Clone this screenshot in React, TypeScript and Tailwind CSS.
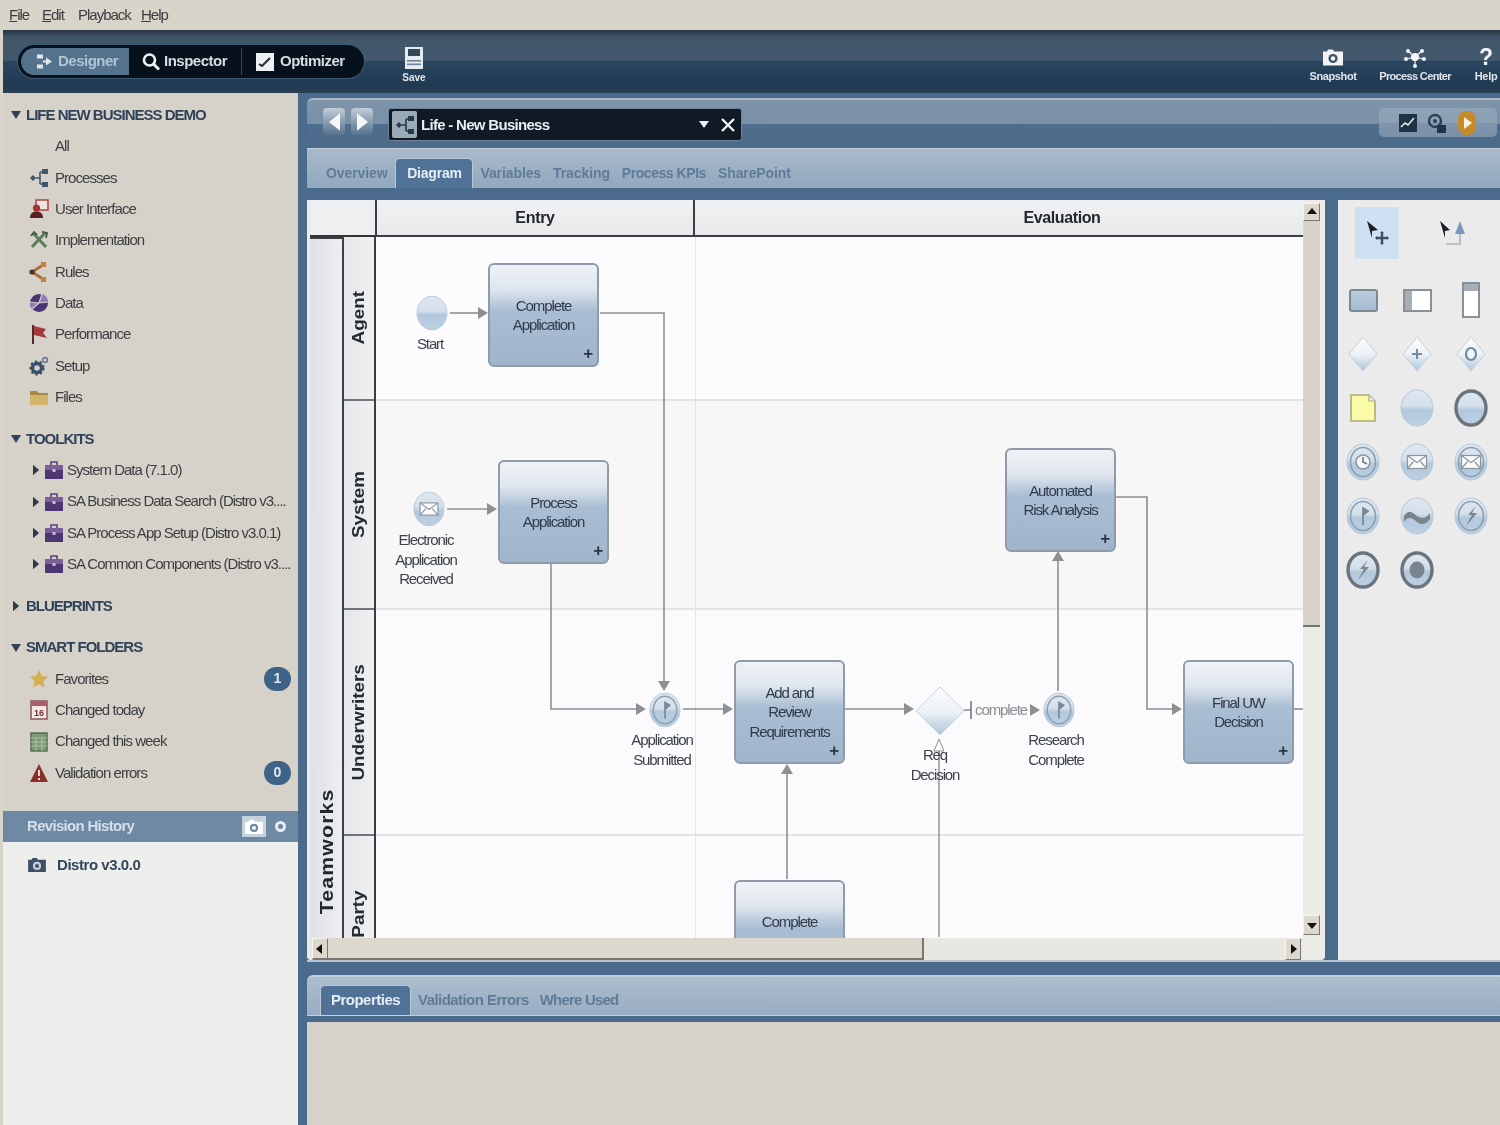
import type { ReactNode } from 'react';

const font = "font-['Liberation_Sans',Arial,sans-serif]";

// sidebar icons
function ProcessIcon({ color = '#40566a' }: { color?: string }) {
  return (
    <svg viewBox="0 0 20 20" className="h-[22px] w-[20px]">
      <path d="M1 10l3-3 3 3-3 3z" fill={color} />
      <path d="M7 10h4M11 4v12M11 4h2M11 16h2" stroke={color} strokeWidth="1.6" fill="none" />
      <rect x="13" y="1" width="6" height="5" fill={color} />
      <rect x="13" y="14" width="6" height="5" fill={color} />
    </svg>
  );
}

function SideIcon({ name }: { name: string }) {
  const cls = 'h-[22px] w-[20px] shrink-0';
  switch (name) {
    case 'process':
      return <ProcessIcon />;
    case 'ui':
      return (
        <svg viewBox="0 0 20 20" className={cls}>
          <rect x="7" y="1" width="12" height="10" fill="#f0e4df" stroke="#a33a3a" strokeWidth="1.4" />
          <circle cx="7.5" cy="9" r="3.6" fill="#a83232" />
          <path d="M1 19c0-5 3-6.5 6.5-6.5S14 14 14 19z" fill="#5a1f24" />
        </svg>
      );
    case 'impl':
      return (
        <svg viewBox="0 0 20 20" className={cls}>
          <path d="M4 3l13 14M16 3L3 17" stroke="#5c7f58" strokeWidth="3" fill="none" />
          <path d="M2 6l3-4 3 3M13 2l5 1-1 5" stroke="#3f5e45" strokeWidth="1.8" fill="none" />
        </svg>
      );
    case 'rules':
      return (
        <svg viewBox="0 0 20 20" className={cls}>
          <path d="M3 10L14 3M3 10l11 7" stroke="#a9713c" strokeWidth="3" fill="none" />
          <circle cx="3" cy="10" r="2.6" fill="#4a3322" />
          <rect x="12" y="0" width="5" height="5" fill="#c5813f" />
          <rect x="12" y="15" width="5" height="5" fill="#c5813f" />
        </svg>
      );
    case 'data':
      return (
        <svg viewBox="0 0 20 20" className={cls}>
          <circle cx="10" cy="10" r="9" fill="#4c3575" />
          <path d="M10 10L13 1a9 9 0 0 1 6 8zM1 9l9 1-7 6a9 9 0 0 1-2-7z" fill="#8f7bbb" />
          <path d="M10 10L13 1M10 10l9-1M10 10l-9-1M10 10l-7 6" stroke="#d6d2c9" strokeWidth="1.2" />
        </svg>
      );
    case 'perf':
      return (
        <svg viewBox="0 0 20 20" className={cls}>
          <path d="M4 1v19" stroke="#5a2a2a" strokeWidth="2" />
          <path d="M5 2l12 3-3 4 4 5-13-3z" fill="#a53a3a" />
        </svg>
      );
    case 'setup':
      return (
        <svg viewBox="0 0 20 20" className={cls}>
          <circle cx="8" cy="12" r="4.5" fill="none" stroke="#37506a" strokeWidth="3.4" />
          <circle cx="8" cy="12" r="6.6" fill="none" stroke="#37506a" strokeWidth="2" strokeDasharray="2.4 2.4" />
          <circle cx="16" cy="4" r="2.4" fill="none" stroke="#6d7f90" strokeWidth="1.8" />
        </svg>
      );
    case 'files':
      return (
        <svg viewBox="0 0 20 20" className={cls}>
          <path d="M1 4h7l2 2h9v12H1z" fill="#a98a45" />
          <path d="M1 8h18v10H1z" fill="#d2b568" />
        </svg>
      );
    case 'kit':
      return (
        <svg viewBox="0 0 20 20" className={cls}>
          <path d="M7 5V2h6v3" fill="none" stroke="#5b3f7d" strokeWidth="1.6" />
          <rect x="1" y="5" width="18" height="14" fill="#4e3672" />
          <rect x="1" y="5" width="18" height="5" fill="#7a6099" />
          <rect x="8.5" y="9" width="3" height="3" fill="#c9bcd8" />
        </svg>
      );
    case 'star':
      return (
        <svg viewBox="0 0 20 20" className={cls}>
          <path d="M10 1l2.8 6 6.2.7-4.6 4.4 1.2 6.4-5.6-3.2-5.6 3.2 1.2-6.4L1 7.7 7.2 7z" fill="#d5b053" />
        </svg>
      );
    case 'today':
      return (
        <svg viewBox="0 0 20 20" className={cls}>
          <rect x="2" y="1" width="16" height="18" fill="#f1e9e5" stroke="#8a4a52" strokeWidth="1.4" />
          <rect x="2" y="1" width="16" height="5" fill="#a9606a" />
          <text x="10" y="16" textAnchor="middle" fontSize="9" fontWeight="700" fill="#7a2c34">16</text>
        </svg>
      );
    case 'week':
      return (
        <svg viewBox="0 0 20 20" className={cls}>
          <rect x="2" y="1" width="16" height="18" fill="#7f9a74" stroke="#4d6a4c" strokeWidth="1.4" />
          <path d="M2 6h16M2 10h16M2 14h16M7 6v13M13 6v13" stroke="#adc1a1" strokeWidth="1" />
        </svg>
      );
    case 'warn':
      return (
        <svg viewBox="0 0 20 20" className={cls}>
          <path d="M10 1l9 18H1z" fill="#8a2f2a" />
          <path d="M10 7v6M10 15v2" stroke="#e8dcd0" strokeWidth="2" />
        </svg>
      );
    default:
      return <span className="w-[20px]" />;
  }
}

function Caret({ open }: { open: boolean }) {
  return open ? (
    <svg viewBox="0 0 10 8" className="h-[8px] w-[10px] shrink-0"><path d="M0 0h10L5 8z" fill="#2e4155" /></svg>
  ) : (
    <svg viewBox="0 0 8 12" className="h-[12px] w-[7px] shrink-0"><path d="M0 0l7 6-7 6z" fill="#2e3c4a" /></svg>
  );
}

function SectionHead({ label, open = true }: { label: string; open?: boolean }) {
  return (
    <div className="flex h-[31.33px] items-center">
      <span className="flex w-[10px] justify-center"><Caret open={open} /></span>
      <span className="ml-[5px] text-[15px] font-bold tracking-[-1px] text-[#2f4259]">{label}</span>
    </div>
  );
}

function SideRow({ icon, label, badge }: { icon: string; label: string; badge?: string }) {
  return (
    <div className="flex h-[31.33px] items-center pl-[18px] pr-[7px]">
      <SideIcon name={icon} />
      <span className="ml-[6px] flex-1 text-[15px] tracking-[-0.95px] text-[#3b3f42]">{label}</span>
      {badge && (
        <span className="flex h-[24px] w-[27px] items-center justify-center rounded-[12px] bg-[#3f6386] text-[14px] font-bold text-[#dfe7ee]">
          {badge}
        </span>
      )}
    </div>
  );
}

function KitRow({ label }: { label: string }) {
  return (
    <div className="flex h-[31.33px] items-center pl-[22px]">
      <Caret open={false} />
      <span className="ml-[4px]"><SideIcon name="kit" /></span>
      <span className="ml-[3px] whitespace-nowrap text-[15px] tracking-[-1px] text-[#3b3f42]">{label}</span>
    </div>
  );
}

function Sidebar() {
  return (
    <aside className="flex w-[295px] flex-col bg-[#d6d2c9]">
      <div className="h-[718px] pl-[8px] pt-[6.5px]">
        <SectionHead label="LIFE NEW BUSINESS DEMO" />
        <SideRow icon="none" label="All" />
        <SideRow icon="process" label="Processes" />
        <SideRow icon="ui" label="User Interface" />
        <SideRow icon="impl" label="Implementation" />
        <SideRow icon="rules" label="Rules" />
        <SideRow icon="data" label="Data" />
        <SideRow icon="perf" label="Performance" />
        <SideRow icon="setup" label="Setup" />
        <SideRow icon="files" label="Files" />
        <div className="mt-[10.6px]">
          <SectionHead label="TOOLKITS" />
          <KitRow label="System Data (7.1.0)" />
          <KitRow label="SA Business Data Search (Distro v3...." />
          <KitRow label="SA Process App Setup (Distro v3.0.1)" />
          <KitRow label="SA Common Components (Distro v3...." />
        </div>
        <div className="mt-[10.6px]">
          <SectionHead label="BLUEPRINTS" open={false} />
        </div>
        <div className="mt-[10px]">
          <SectionHead label="SMART FOLDERS" />
          <SideRow icon="star" label="Favorites" badge="1" />
          <SideRow icon="today" label="Changed today" />
          <SideRow icon="week" label="Changed this week" />
          <SideRow icon="warn" label="Validation errors" badge="0" />
        </div>
      </div>
      <div className="flex h-[31px] items-center bg-[#6d89a4] pl-[24px] pr-[12px]">
        <span className="flex-1 text-[15px] font-bold tracking-[-0.7px] text-[#d5dfe8]">Revision History</span>
        <span className="flex h-[21px] w-[24px] items-center justify-center bg-[#c5d2de]">
          <CameraGlyph className="h-[16px] w-[20px]" fill="#ffffff" hole="#6d89a4" />
        </span>
        <span className="ml-[9px] h-[11px] w-[11px] rounded-full border-[3px] border-[#e6ecf1]" />
      </div>
      <div className="flex-1 bg-[#eeeeec] pl-[24px] pt-[12px]">
        <div className="flex items-center gap-[10px]">
          <CameraGlyph className="h-[16px] w-[20px]" fill="#3d5166" hole="#c6d0da" />
          <span className="text-[15px] font-bold tracking-[-0.45px] text-[#34465a]">Distro v3.0.0</span>
        </div>
      </div>
    </aside>
  );
}

function CameraGlyph({ className, fill, hole }: { className: string; fill: string; hole: string }) {
  return (
    <svg viewBox="0 0 22 18" className={className}>
      <path d="M1 3h4l1-2h5l1 2h9v14H1z" fill={fill} />
      <circle cx="11" cy="10" r="4.6" fill={hole} />
      <circle cx="11" cy="10" r="2.2" fill={fill} />
    </svg>
  );
}

function Toolbar() {
  return (
    <header className="relative flex h-[63px] items-center bg-[linear-gradient(#27343f_0%,#42566a_12%,#43586c_48%,#2a455f_50%,#203a53_88%,#2a3f52_100%)] pl-[15px] pr-[3px]">
      <div className="flex h-[33px] w-[346px] items-center rounded-[17px] bg-[#06111b] p-[3px] shadow-[0_0_0_1px_#3d5a75]">
        <div className="flex h-full w-[108px] items-center gap-[6px] rounded-l-[14px] bg-[#54728c] pl-[15px] text-[15px] font-bold tracking-[-0.5px] text-[#b3c5d4]">
          <svg viewBox="0 0 16 16" className="h-[17px] w-[16px]">
            <path d="M1 1h6v4H1zM1 11h6v4H1z" fill="#dfe7ee" />
            <path d="M7 8h4" stroke="#dfe7ee" strokeWidth="2" />
            <path d="M10 4l6 4-6 4z" fill="#dfe7ee" />
          </svg>
          Designer
        </div>
        <div className="flex h-full w-[113px] items-center gap-[4px] border-r border-[#30465a] pl-[13px] text-[15px] font-bold tracking-[-0.5px] text-[#d5dce2]">
          <svg viewBox="0 0 18 18" className="h-[21px] w-[18px]">
            <circle cx="7.5" cy="7.5" r="5.5" fill="none" stroke="#eef2f5" strokeWidth="2.6" />
            <path d="M11.5 11.5L17 17" stroke="#eef2f5" strokeWidth="3" />
          </svg>
          Inspector
        </div>
        <div className="flex h-full flex-1 items-center gap-[6px] pl-[14px] text-[15px] font-bold tracking-[-0.5px] text-[#d5dce2]">
          <svg viewBox="0 0 18 18" className="h-[18px] w-[18px]">
            <rect width="18" height="18" fill="#eef2f5" />
            <path d="M3 11l3 2 8-8" stroke="#1e2d3a" strokeWidth="2" fill="none" />
          </svg>
          Optimizer
        </div>
      </div>
      <div className="ml-[37px] flex w-[26px] flex-col items-center pt-[7px]">
        <svg viewBox="0 0 18 22" className="h-[22px] w-[18px]">
          <rect width="18" height="22" fill="#e6ebef" />
          <rect x="3" y="2" width="12" height="7" fill="#33485c" />
          <rect x="2" y="13" width="14" height="1.6" fill="#6f8194" />
          <rect x="2" y="16.5" width="14" height="1.6" fill="#6f8194" />
        </svg>
        <span className="mt-[3px] text-[10px] font-bold leading-[12px] text-[#dfe5ea]">Save</span>
      </div>
      <div className="ml-auto flex pt-[7px]">
        <div className="flex w-[46px] flex-col items-center">
          <CameraGlyph className="h-[21px] w-[22px]" fill="#f2f4f6" hole="#3e5468" />
          <span className="mt-[2px] whitespace-nowrap text-[11px] font-bold leading-[13px] tracking-[-0.4px] text-[#dfe5ea]">Snapshot</span>
        </div>
        <div className="ml-[24px] flex w-[70px] flex-col items-center">
          <svg viewBox="0 0 22 21" className="h-[21px] w-[22px]">
            <path d="M11 10L4 4M11 10l7-6M11 10L2 12M11 10l9 2M11 10v9" stroke="#f2f4f6" strokeWidth="1.2" />
            <circle cx="11" cy="10" r="4" fill="#f2f4f6" />
            <circle cx="4" cy="4" r="2" fill="#f2f4f6" />
            <circle cx="18" cy="4" r="2" fill="#f2f4f6" />
            <circle cx="2" cy="12" r="2" fill="#f2f4f6" />
            <circle cx="20" cy="12" r="2" fill="#f2f4f6" />
            <circle cx="11" cy="19" r="2" fill="#f2f4f6" />
          </svg>
          <span className="mt-[2px] whitespace-nowrap text-[11px] font-bold leading-[13px] tracking-[-0.65px] text-[#dfe5ea]">Process Center</span>
        </div>
        <div className="ml-[25px] flex w-[22px] flex-col items-center">
          <span className="h-[21px] text-[23px] font-bold leading-[21px] text-[#f2f4f6]">?</span>
          <span className="mt-[2px] text-[11px] font-bold leading-[13px] tracking-[-0.3px] text-[#dfe5ea]">Help</span>
        </div>
      </div>
    </header>
  );
}

function NavButton({ dir }: { dir: 'l' | 'r' }) {
  return (
    <div className="flex h-[27px] w-[22px] items-center justify-center rounded-[4px] bg-[linear-gradient(#c3ced9,#7f95ab_60%,#56738f)]">
      <svg viewBox="0 0 10 16" className="h-[18px] w-[11px]">
        <path d={dir === 'l' ? 'M10 0v16L0 8z' : 'M0 0v16l10-8z'} fill="#f4f6f8" />
      </svg>
    </div>
  );
}

function PanelHeader() {
  return (
    <div className="flex h-[50px] items-start rounded-tl-[6px] border-t-2 border-[#a9b9c9] bg-[linear-gradient(#7e94aa_0%,#7a90a6_50%,#4f6e8d_51%,#4c6b8a_100%)] pl-[16px] pr-[3px] pt-[8px]">
      <NavButton dir="l" />
      <span className="w-[6px]" />
      <NavButton dir="r" />
      <div className="ml-[15px] flex h-[33px] w-[354px] items-center rounded-[3px] border border-[#6d8299] bg-[#0f1a24] pl-[3px] pr-[6px]">
        <span className="flex h-[27px] w-[25px] items-center justify-center rounded-[2px] bg-[#9aa9b7]">
          <ProcessIcon color="#26384a" />
        </span>
        <span className="ml-[4px] flex-1 pt-[2px] text-[15px] font-bold tracking-[-0.7px] text-[#e8edf1]">Life - New Business</span>
        <svg viewBox="0 0 10 7" className="h-[7px] w-[10px]"><path d="M0 0h10L5 7z" fill="#e8edf1" /></svg>
        <svg viewBox="0 0 14 14" className="ml-[12px] h-[16px] w-[14px]">
          <path d="M1 1l12 12M13 1L1 13" stroke="#f2f4f6" strokeWidth="2.4" />
        </svg>
      </div>
      <div className="ml-auto flex h-[29px] w-[118px] items-center justify-end gap-[10px] rounded-[5px] bg-[linear-gradient(#8fa3b6,#8ca0b4_50%,#7f95ab_52%,#7b91a7)] pr-[20px]">
        <svg viewBox="0 0 18 18" className="h-[20px] w-[18px]">
          <rect width="18" height="18" fill="#1f3346" />
          <path d="M2 13l4-4 3 2 6-7" stroke="#dfe7ee" strokeWidth="1.6" fill="none" />
        </svg>
        <svg viewBox="0 0 20 22" className="h-[22px] w-[20px]">
          <circle cx="8" cy="9" r="6" fill="none" stroke="#2b4054" strokeWidth="2.4" />
          <circle cx="8" cy="9" r="2" fill="#2b4054" />
          <rect x="10" y="13" width="9" height="8" fill="#1f3346" />
        </svg>
        <svg viewBox="0 0 18 24" className="h-[24px] w-[20px]">
          <rect width="18" height="24" rx="8" fill="#c58b2a" />
          <path d="M6 6l8 6-8 6z" fill="#fbf3dc" />
        </svg>
      </div>
    </div>
  );
}

function PanelTabs() {
  const muted = 'flex h-[30px] items-center text-[14px] font-bold text-[#5e7b97]';
  return (
    <div className="flex h-[40px] items-end border-t border-[#c8d3de] bg-[linear-gradient(#a9bacb,#92a8be)] pl-[19px]">
      <span className={`${muted} mr-[8px] tracking-[-0.1px]`}>Overview</span>
      <span className="flex h-[30px] w-[78px] items-center justify-center rounded-t-[5px] border-x border-t border-[#b9c8d6] bg-[#4f7296] text-[14px] font-bold tracking-[-0.2px] text-[#e6edf3]">
        Diagram
      </span>
      <span className={`${muted} ml-[7px] tracking-[-0.1px]`}>Variables</span>
      <span className={`${muted} ml-[12px] tracking-[-0.1px]`}>Tracking</span>
      <span className={`${muted} ml-[12px] tracking-[-0.45px]`}>Process KPIs</span>
      <span className={`${muted} ml-[12px] tracking-[-0.1px]`}>SharePoint</span>
    </div>
  );
}

// diagram pieces
const flagPath = 'M17 10v18M17 11l5 3-5 4';

function EventShape({ kind }: { kind: string }) {
  const ring = ['timer', 'msgRing', 'flagRing', 'boltRing'].includes(kind);
  const thick = ['thick', 'boltThick', 'stopThick'].includes(kind);
  return (
    <svg viewBox="0 0 34 38" className="h-[38px] w-[34px]">
      <ellipse cx="17" cy="19" rx={thick ? 15 : 16} ry={thick ? 17 : 18} fill="url(#bubble)" stroke={thick ? '#6b747c' : '#b9c8d6'} strokeWidth={thick ? 3.4 : 1} />
      {ring && <ellipse cx="17" cy="19" rx="12.5" ry="14.5" fill="none" stroke="#8ca0b4" strokeWidth="1.6" />}
      {(kind === 'msgFill' || kind === 'msgRing') && (
        <g>
          <rect x="7.5" y="12.5" width="19" height="13" fill="#f8fafb" stroke="#8b949c" strokeWidth="1.2" />
          <path d="M7.5 12.5l9.5 7 9.5-7M7.5 25.5l6-7M26.5 25.5l-6-7" fill="none" stroke="#8b949c" strokeWidth="1.2" />
        </g>
      )}
      {kind === 'timer' && (
        <g>
          <circle cx="17" cy="19" r="7" fill="#f4f6f8" stroke="#8b949c" strokeWidth="1.6" />
          <path d="M17 14v5l4 2" fill="none" stroke="#6b747c" strokeWidth="1.6" />
        </g>
      )}
      {kind === 'flagRing' && <path d={flagPath} fill="#7b8894" stroke="#7b8894" strokeWidth="1.8" />}
      {kind === 'wave' && <path d="M4 19c5-8 9-3 13 0s9 3 13-3v6c-4 6-9 6-13 3s-8-7-13 0z" fill="#7a848c" />}
      {(kind === 'boltRing' || kind === 'boltThick') && <path d="M22 9l-8 9h4l-6 11 11-13h-5z" fill="#7a848c" />}
      {kind === 'stopThick' && <ellipse cx="17" cy="19" rx="7.5" ry="8.5" fill="#7a848c" />}
    </svg>
  );
}

function Task({ lines, pos, expand = true }: { lines: string[]; pos: string; expand?: boolean }) {
  return (
    <div
      className={`absolute flex h-[104px] w-[111px] flex-col items-center justify-center rounded-[6px] border-2 border-[#8f9ba8] bg-[linear-gradient(#eef2f6_0%,#dfe6ee_24%,#a9bdd3_46%,#a0b4cb_100%)] text-[15px] leading-[19.5px] tracking-[-1.1px] text-[#2f3b48] ${pos}`}
    >
      {lines.map((l) => (
        <span key={l}>{l}</span>
      ))}
      {expand && <span className="absolute bottom-[1px] right-[5px] text-[17px] font-bold leading-[20px] text-[#2a3542]">+</span>}
    </div>
  );
}

function NodeLabel({ lines, pos }: { lines: string[]; pos: string }) {
  return (
    <div className={`absolute flex w-[90px] flex-col items-center text-[15px] leading-[19.5px] tracking-[-1.1px] text-[#3c4348] ${pos}`}>
      {lines.map((l) => (
        <span key={l}>{l}</span>
      ))}
    </div>
  );
}

function Connectors() {
  const lines = [
    'M450 314H480',
    'M600 314H664V683',
    'M447 510H489',
    'M551 565V710H638',
    'M683 710H725',
    'M845 710H906',
    'M964 711H971',
    'M1030 711H1032',
    'M1058 692V560',
    'M1116 498H1147V710H1174',
    'M1294 710H1303',
    'M787 880V773',
  ];
  const heads = [
    'M478 308l10 6-10 6z',
    'M658 682l6 10 6-10z',
    'M487 504l10 6-10 6z',
    'M636 704l10 6-10 6z',
    'M723 704l10 6-10 6z',
    'M904 704l10 6-10 6z',
    'M1030 705l10 6-10 6z',
    'M1052 562l6-10 6 10z',
    'M1172 704l10 6-10 6z',
    'M781 775l6-10 6 10z',
  ];
  return (
    <svg viewBox="376 238 927 700" className="absolute inset-0 h-[700px] w-[927px]">
      {lines.map((d) => (
        <path key={d} d={d} fill="none" stroke="#8d8f91" strokeWidth="1.6" />
      ))}
      {heads.map((d) => (
        <path key={d} d={d} fill="#8d8f91" />
      ))}
      <path d="M971 702v18" stroke="#777" strokeWidth="1.6" />
      <path d="M939 938V745" stroke="#8d8f91" strokeWidth="1.4" />
      <path d="M939 740l-5 12h10z" fill="#fff" stroke="#8d8f91" strokeWidth="1" />
    </svg>
  );
}

function LaneLabel({ text, h }: { text: string; h: string }) {
  return (
    <div className={`flex items-center justify-center overflow-hidden border-b-2 border-[#6f7478] bg-[linear-gradient(90deg,#e4e6e8,#f0f1f2)] ${h}`}>
      <span className="scale-y-[1.18] rotate-180 text-[16px] font-bold text-[#262b30] [writing-mode:vertical-rl]">{text}</span>
    </div>
  );
}

function Canvas() {
  return (
    <div className="relative flex-1 overflow-hidden bg-[#fbfbfd]">
      <div className="absolute inset-0 flex flex-col">
        <div className="h-[164px] border-b-2 border-[#e2e3e5] bg-[#fcfcfe]" />
        <div className="h-[209px] border-b-2 border-[#e2e3e5] bg-[#f7f7f7]" />
        <div className="h-[226px] border-b-2 border-[#e2e3e5] bg-[#fbfbfd]" />
      </div>
      <div className="absolute inset-y-0 left-[319px] w-px bg-[#e6e6e8]" />
      <Connectors />
      <Task lines={['Complete', 'Application']} pos="left-[112px] top-[26px]" />
      <Task lines={['Process', 'Application']} pos="left-[122px] top-[223px]" />
      <Task lines={['Automated', 'Risk Analysis']} pos="left-[629px] top-[211px]" />
      <Task lines={['Add and', 'Review', 'Requirements']} pos="left-[358px] top-[423px]" />
      <Task lines={['Final UW', 'Decision']} pos="left-[807px] top-[423px]" />
      <Task lines={['Complete']} pos="left-[358px] top-[643px] pb-[20px]" expand={false} />
      <div className="absolute left-[39px] top-[57px] scale-[0.94]"><EventShape kind="plain" /></div>
      <div className="absolute left-[36px] top-[253px] scale-[0.94]"><EventShape kind="msgFill" /></div>
      <div className="absolute left-[272px] top-[454px] scale-[0.94]"><EventShape kind="flagRing" /></div>
      <div className="absolute left-[666px] top-[454px] scale-[0.94]"><EventShape kind="flagRing" /></div>
      <svg viewBox="0 0 50 50" className="absolute left-[539px] top-[449px] h-[50px] w-[50px]">
        <path d="M25 1l24 24-24 24L1 25z" fill="url(#gem)" stroke="#c9d3dc" strokeWidth="1" />
      </svg>
      <span className="absolute left-[599px] top-[463px] text-[15px] leading-[20px] tracking-[-1.1px] text-[#8a8d90]">complete</span>
      <NodeLabel lines={['Start']} pos="left-[9px] top-[97px]" />
      <NodeLabel lines={['Electronic', 'Application', 'Received']} pos="left-[5px] top-[293px]" />
      <NodeLabel lines={['Application', 'Submitted']} pos="left-[241px] top-[493px]" />
      <NodeLabel lines={['Req', 'Decision']} pos="left-[514px] top-[508px]" />
      <NodeLabel lines={['Research', 'Complete']} pos="left-[635px] top-[493px]" />
    </div>
  );
}

function ScrollBtn({ d, cls }: { d: string; cls: string }) {
  return (
    <span className={`flex items-center justify-center border border-b-[#777] border-r-[#777] border-l-[#f4f3ef] border-t-[#f4f3ef] bg-[#dcd8ce] ${cls}`}>
      <svg viewBox="0 0 10 10" className="h-[10px] w-[10px]"><path d={d} fill="#111" /></svg>
    </span>
  );
}

function Diagram() {
  return (
    <div className="flex h-[760px] w-[1018px] rounded-b-[4px] bg-[#ecebe8] pl-[3px]">
      <div className="flex w-[993px] flex-col">
        <div className="flex h-[37px] bg-[#eeeff0]">
          <div className="w-[65px] border-b-2 border-[#333]" />
          <div className="flex w-[320px] items-center justify-center border-x-2 border-b-2 border-x-[#3b3f44] border-b-[#3b3f44] bg-[linear-gradient(#f0f1f2,#e8e9eb)] text-[16px] font-bold tracking-[-0.3px] text-[#23272b]">
            Entry
          </div>
          <div className="flex flex-1 items-center justify-center border-b-2 border-[#3b3f44] bg-[linear-gradient(#f0f1f2,#e8e9eb)] pl-[126px] text-[16px] font-bold tracking-[-0.4px] text-[#23272b]">
            Evaluation
          </div>
        </div>
        <div className="flex h-[701px]">
          <div className="flex w-[34px] items-end justify-center border-r-2 border-t-2 border-[#3b3f44] bg-[linear-gradient(90deg,#dfe1e4,#eceef0)] pb-[33px]">
            <span className="translate-x-[1px] scale-y-[1.18] rotate-180 text-[18px] font-bold tracking-[1px] text-[#23272b] [writing-mode:vertical-rl]">Teamworks</span>
          </div>
          <div className="flex w-[32px] flex-col border-r-2 border-[#3b3f44]">
            <LaneLabel text="Agent" h="h-[164px]" />
            <LaneLabel text="System" h="h-[209px]" />
            <LaneLabel text="Underwriters" h="h-[226px]" />
            <div className="flex flex-1 items-start justify-center overflow-hidden bg-[linear-gradient(90deg,#e4e6e8,#f0f1f2)] pt-[58px]">
              <span className="scale-y-[1.18] rotate-180 text-[16px] font-bold text-[#262b30] [writing-mode:vertical-rl]">Party</span>
            </div>
          </div>
          <Canvas />
        </div>
        <div className="flex h-[22px] bg-[#e9e7e1]">
          <ScrollBtn d="M7 0v10L1 5z" cls="ml-[2px] w-[16px] border-b-2" />
          <div className="w-[596px] border-b-2 border-r-2 border-[#77756f] bg-[#dcd8ce]" />
          <div className="flex-1" />
          <ScrollBtn d="M3 0v10l6-5z" cls="w-[16px] mr-[2px]" />
        </div>
      </div>
      <div className="flex w-[17px] flex-col bg-[#ecebe8]">
        <ScrollBtn d="M0 7h10L5 1z" cls="mt-[3px] h-[18px]" />
        <div className="h-[406px] border-b-2 border-[#77756f] bg-[#d8d4ca]" />
        <div className="flex-1" />
        <ScrollBtn d="M0 3h10L5 9z" cls="mb-[25px] h-[20px]" />
      </div>
    </div>
  );
}

function PaletteCell({ children }: { children: ReactNode }) {
  return <div className="flex h-[54px] w-[54px] items-center justify-center">{children}</div>;
}

function Palette() {
  const events = ['plain', 'thick', 'timer', 'msgFill', 'msgRing', 'flagRing', 'wave', 'boltRing', 'boltThick', 'stopThick'];
  return (
    <div className="ml-[13px] h-[760px] w-[162px] bg-[#ebebeb] pt-[7px]">
      <div className="flex h-[52px] pl-[17px]">
        <div className="flex w-[44px] items-center justify-center bg-[#cfe0f2]">
          <svg viewBox="0 0 24 28" className="h-[28px] w-[24px]">
            <path d="M2 2l11 9-6 1v7z" fill="#1b2026" />
            <path d="M17 14v10M12 19h10" stroke="#3a5068" strokeWidth="2.4" />
            <path d="M17 12l-2 2h4zM17 26l-2-2h4zM10 19l2-2v4zM24 19l-2-2v4z" fill="#3a5068" />
          </svg>
        </div>
        <svg viewBox="0 0 30 30" className="ml-[40px] mt-[12px] h-[30px] w-[30px]">
          <path d="M1 2l10 9-5 1v7z" fill="#1b2026" />
          <path d="M21 2l5 13H16z" fill="#7d97bb" />
          <path d="M21 15v10H7" stroke="#a7b4c2" strokeWidth="1.6" fill="none" />
        </svg>
      </div>
      <div className="ml-[-2px] mt-[14px] grid grid-cols-[repeat(3,54px)]">
        <PaletteCell>
          <span className="h-[23px] w-[29px] rounded-[3px] border-2 border-[#7b8896] bg-[linear-gradient(#bdcddd,#a5bbd1)]" />
        </PaletteCell>
        <PaletteCell>
          <span className="flex h-[23px] w-[29px] border-2 border-[#8a8f95] bg-white"><span className="w-[7px] bg-[#a6aeb6]" /></span>
        </PaletteCell>
        <PaletteCell>
          <span className="flex h-[36px] w-[18px] flex-col border-2 border-[#8a8f95] bg-white"><span className="h-[7px] bg-[#a6aeb6]" /></span>
        </PaletteCell>
        {['', 'plus', 'ring'].map((m) => (
          <PaletteCell key={m}>
            <svg viewBox="0 0 30 36" className="h-[36px] w-[30px]">
              <path d="M15 1l14 17-14 17L1 18z" fill="url(#gem)" stroke="#c4cfd9" strokeWidth="1" />
              {m === 'plus' && <path d="M15 13v10M10 18h10" stroke="#6f8ba6" strokeWidth="2" />}
              {m === 'ring' && <ellipse cx="15" cy="18" rx="5" ry="6" fill="#f4f6f8" stroke="#6f8ba6" strokeWidth="2.2" />}
            </svg>
          </PaletteCell>
        ))}
        <PaletteCell>
          <svg viewBox="0 0 26 28" className="h-[28px] w-[26px]">
            <path d="M1 1h18l6 6v20H1z" fill="#fafaa8" stroke="#a9ad78" strokeWidth="1.6" />
            <path d="M19 1v6h6" fill="#e8e8e8" stroke="#a9ad78" strokeWidth="1.2" />
          </svg>
        </PaletteCell>
        {events.map((k) => (
          <PaletteCell key={k}><EventShape kind={k} /></PaletteCell>
        ))}
      </div>
    </div>
  );
}

function Properties() {
  return (
    <>
      <div className="flex h-[40px] items-end rounded-tl-[6px] border-t-2 border-[#c3cfdb] bg-[linear-gradient(#adbdcd,#98adc2)] pl-[13px]">
        <span className="flex h-[30px] w-[91px] items-center justify-center rounded-t-[5px] border-x border-t border-[#b9c8d6] bg-[#4f7296] text-[15px] font-bold tracking-[-0.5px] text-[#e6edf3]">
          Properties
        </span>
        <span className="flex h-[30px] items-center pl-[7px] text-[15px] font-bold tracking-[-0.55px] text-[#5e7b97]">Validation Errors</span>
        <span className="flex h-[30px] items-center pl-[11px] text-[15px] font-bold tracking-[-0.8px] text-[#5e7b97]">Where Used</span>
      </div>
      <div className="h-[7px] border-t border-[#c3cfdb] bg-[#4a6b8c]" />
      <div className="flex-1 bg-[#d6d2c9]" />
    </>
  );
}

export default function App() {
  return (
    <div className={`flex h-[1125px] w-[1500px] flex-col overflow-hidden bg-[#d8d4ca] pl-[3px] blur-[0.6px] ${font}`}>
      <svg className="absolute h-0 w-0">
        <defs>
          <linearGradient id="bubble" x1="0" y1="0" x2="0" y2="1">
            <stop offset="0" stopColor="#dfe8f0" />
            <stop offset="0.45" stopColor="#d3dfea" />
            <stop offset="0.55" stopColor="#b3c8dc" />
            <stop offset="1" stopColor="#bcd0e3" />
          </linearGradient>
          <linearGradient id="gem" x1="0" y1="0" x2="0" y2="1">
            <stop offset="0" stopColor="#fbfcfd" />
            <stop offset="0.5" stopColor="#eef2f6" />
            <stop offset="1" stopColor="#adc6dc" />
          </linearGradient>
        </defs>
      </svg>
      <nav className="flex h-[30px] items-center bg-[#d8d4ca] pl-[6px] text-[15px] tracking-[-1px] text-[#3a3d40]">
        <span className="w-[33px]"><span className="underline">F</span>ile</span>
        <span className="w-[36px]"><span className="underline">E</span>dit</span>
        <span className="w-[63px]">Playback</span>
        <span><span className="underline">H</span>elp</span>
      </nav>
      <Toolbar />
      <div className="flex flex-1">
        <Sidebar />
        <main className="flex flex-1 flex-col bg-[#4a6b8c] pl-[9px] pt-[5px]">
          <PanelHeader />
          <PanelTabs />
          <div className="h-[12px]" />
          <div className="flex">
            <Diagram />
            <Palette />
          </div>
          <div className="h-[15px] border-t-2 border-[#b8c4cf]" />
          <Properties />
        </main>
      </div>
    </div>
  );
}
